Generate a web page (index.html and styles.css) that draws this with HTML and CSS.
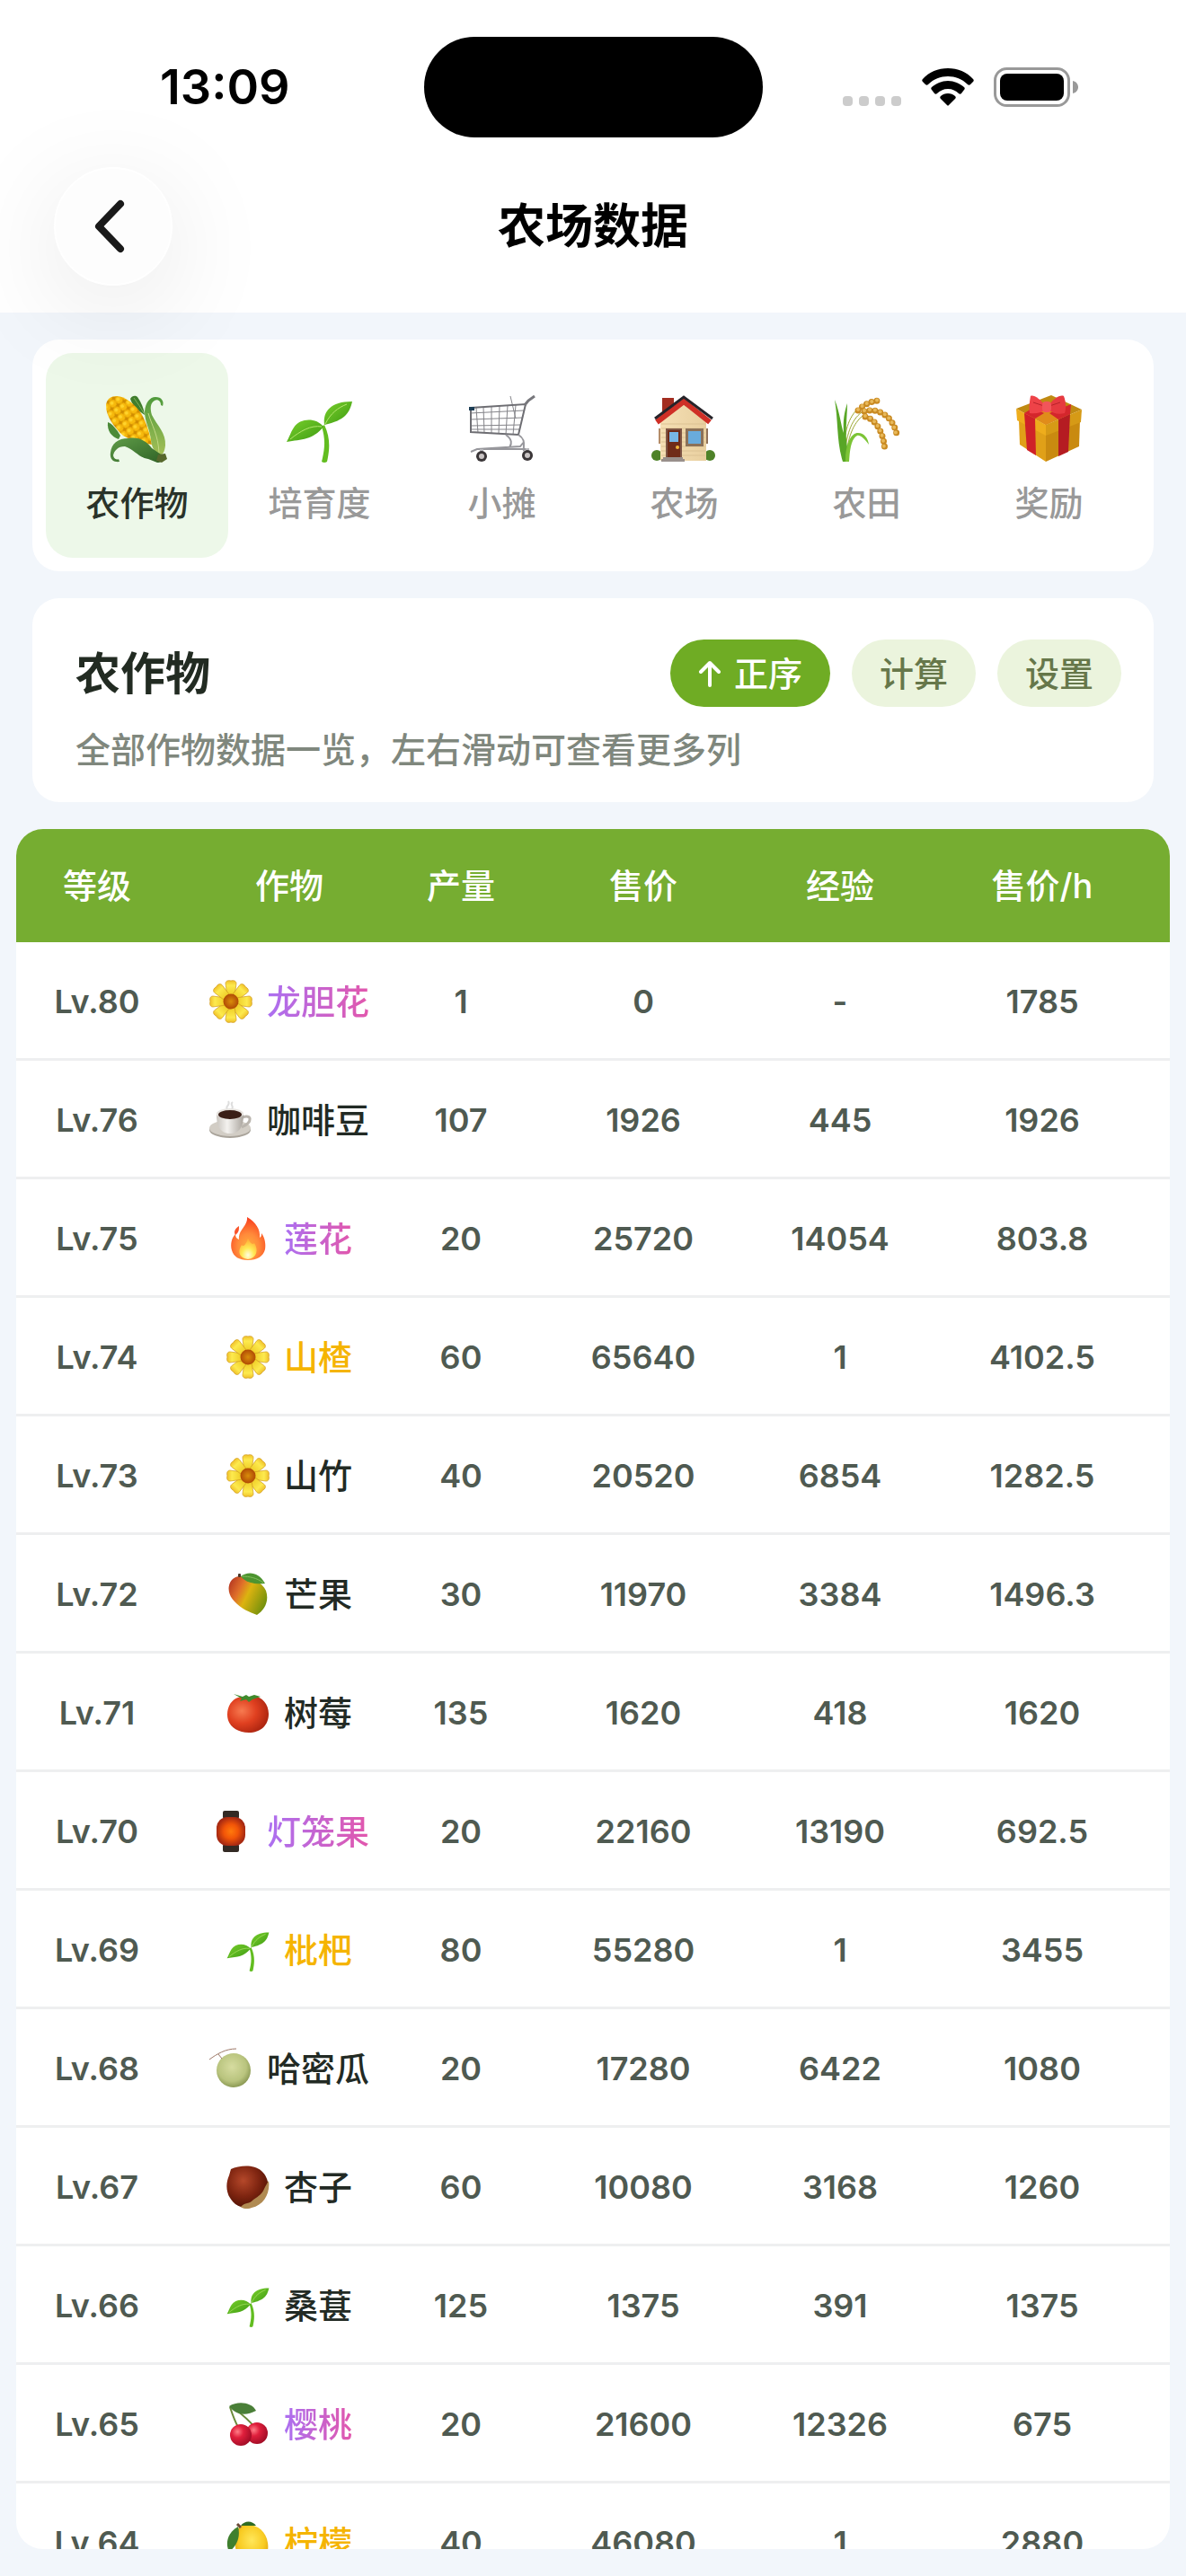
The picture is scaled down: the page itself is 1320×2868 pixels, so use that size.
FILE: index.html
```
<!DOCTYPE html>
<html lang="zh-CN">
<head>
    <meta charset="UTF-8">
    <meta name="viewport" content="width=device-width, initial-scale=1.0">
    <title>农场数据</title>
    <link rel="stylesheet" href="styles.css">
</head>
<body>
    <!-- Icon sprite -->
    <svg class="sprite" aria-hidden="true">
        <defs>
            <pattern id="kernels" width="8" height="9" patternUnits="userSpaceOnUse" patternTransform="rotate(-32)">
                <rect width="8" height="9" fill="#d08c00"/>
                <ellipse cx="4" cy="4.5" rx="3.9" ry="4.2" fill="#f7b90c"/>
                <ellipse cx="3.4" cy="3.4" rx="2" ry="2" fill="#ffd42c"/>
            </pattern>
            <linearGradient id="husk" x1="0" y1="0" x2="0" y2="1">
                <stop offset="0" stop-color="#4f9a3c"/><stop offset="1" stop-color="#a3bf56"/>
            </linearGradient>
            <linearGradient id="huskDark" x1="0" y1="0" x2="1" y2="1">
                <stop offset="0" stop-color="#5f9c48"/><stop offset="1" stop-color="#2f6226"/>
            </linearGradient>
            <linearGradient id="leaf" x1="0" y1="0" x2="1" y2="1">
                <stop offset="0" stop-color="#7ad02c"/><stop offset="1" stop-color="#3c9a12"/>
            </linearGradient>
            <radialGradient id="core">
                <stop offset="0" stop-color="#d98d0a"/><stop offset="1" stop-color="#b04a05"/>
            </radialGradient>
            <linearGradient id="petal" x1="0" y1="0" x2="0" y2="1">
                <stop offset="0" stop-color="#f0c02a"/><stop offset=".3" stop-color="#fdea4e"/><stop offset="1" stop-color="#ecc81f"/>
            </linearGradient>
            <linearGradient id="cup" x1="0" y1="0" x2="1" y2="0">
                <stop offset="0" stop-color="#c9c5bf"/><stop offset=".4" stop-color="#f4f2ef"/><stop offset="1" stop-color="#aaa59e"/>
            </linearGradient>
            <radialGradient id="flame" cx=".5" cy=".7" r=".7">
                <stop offset="0" stop-color="#ffb03c"/><stop offset=".45" stop-color="#ff8a3a"/><stop offset="1" stop-color="#f93a1c"/>
            </radialGradient>
            <radialGradient id="flameCore" cx=".5" cy=".8" r=".7">
                <stop offset="0" stop-color="#fffde0"/><stop offset=".5" stop-color="#ffe955"/><stop offset="1" stop-color="#ffb63a"/>
            </radialGradient>
            <linearGradient id="mangoSkin" x1="0" y1=".2" x2="1" y2=".7">
                <stop offset="0" stop-color="#b83a22"/><stop offset=".28" stop-color="#e0702a"/>
                <stop offset=".5" stop-color="#dcb310"/><stop offset="1" stop-color="#6f8f0c"/>
            </linearGradient>
            <radialGradient id="tomatoSkin" cx=".35" cy=".4" r=".7">
                <stop offset="0" stop-color="#f77a50"/><stop offset=".5" stop-color="#e04020"/><stop offset="1" stop-color="#a9230f"/>
            </radialGradient>
            <radialGradient id="glow">
                <stop offset="0" stop-color="#ff7a0c"/><stop offset=".5" stop-color="#f25508"/><stop offset="1" stop-color="#a82a12"/>
            </radialGradient>
            <radialGradient id="melonSkin" cx=".45" cy=".4" r=".6">
                <stop offset="0" stop-color="#d6dca0"/><stop offset=".7" stop-color="#b9c47e"/><stop offset="1" stop-color="#8c9a55"/>
            </radialGradient>
            <radialGradient id="nut" cx=".4" cy=".35" r=".65">
                <stop offset="0" stop-color="#b5482a"/><stop offset=".6" stop-color="#7d2410"/><stop offset="1" stop-color="#551405"/>
            </radialGradient>
            <radialGradient id="berry" cx=".35" cy=".35" r=".7">
                <stop offset="0" stop-color="#ff7c86"/><stop offset=".4" stop-color="#e01f3c"/><stop offset="1" stop-color="#a00d26"/>
            </radialGradient>
            <radialGradient id="lemonSkin" cx=".5" cy=".4" r=".65">
                <stop offset="0" stop-color="#ffe75a"/><stop offset=".6" stop-color="#f8cb22"/><stop offset="1" stop-color="#d99c0c"/>
            </radialGradient>
            <linearGradient id="wall" x1="0" y1="0" x2="1" y2="0">
                <stop offset="0" stop-color="#f5dfb4"/><stop offset="1" stop-color="#e8cf9f"/>
            </linearGradient>
        </defs>

        <symbol id="i-corn" viewBox="0 0 75 75">
            <path d="M5 30C9 31 15 38 19 45L17 49C9 46 4 40 5 30Z" fill="#4b8a38"/>
            <path d="M30 4C32 0 36 0 38 2C42 8 45 14 46 22C38 17 32 11 30 4Z" fill="#3f7d2c"/>
            <path d="M34 3C38 9 42 14 45 20" fill="none" stroke="#7fb35a"/>
            <path d="M3 12C3 4 9 1 15 1C24 1 35 10 42 20C48 30 52 44 54 55C42 53 30 50 22 45C12 36 3 23 3 12Z" fill="url(#kernels)"/>
            <path d="M46 18C47 8 52 2 58 2C65 2 68 7 66 12L64 11C64 6 60 4 57 6C52 9 52 15 54 22C60 34 70 42 69 56C68 64 66 67 62 66C56 62 54 58 53 50C52 38 46 30 46 18Z" fill="url(#husk)"/>
            <path d="M50 20C54 34 61 44 62 64" fill="none" stroke="#c2d884" stroke-width="1"/>
            <path d="M18 74C10 75 7 70 8 64C9 54 16 48 28 48C39 46 48 51 54 59L67 68C68 73 64 75 60 75L50 71C40 70 34 60 24 57C16 57 12 62 11 67C12 72 16 72 17 71Z" fill="url(#huskDark)"/>
            <path d="M61 66L69 65L71 71L65 75L59 73Z" fill="#57672c"/>
        </symbol>
        <symbol id="i-seedling" viewBox="0 0 75 75">
            <path d="M40 35C45 50 43 62 40 74Q43 76 46 74C49 60 50 48 43 33Z" fill="#62bd20"/>
            <path d="M43 33C41 18 50 7 74 7C71 20 66 28 43 33Z" fill="url(#leaf)"/>
            <path d="M42 35C34 25 16 25 9 36C5 42 4 47 1 52C18 49 30 50 42 35Z" fill="url(#leaf)"/>
            <path d="M44 32C50 20 58 14 68 10M40 35C28 33 16 40 5 49" fill="none" stroke="#b5e66e" stroke-width="1"/>
        </symbol>
        <symbol id="i-cart" viewBox="0 0 75 75">
            <g fill="none" stroke="#85858a" stroke-width="1">
                <path d="M9 14L11 42M17 13L18 42M26 12L26 43M35 12L34 43M44 11L42 44M53 11L50 44"/>
                <path d="M2 20L62 17M2 27L61 25M3 34L59 33M3 38L58 38M47 1L53 26"/>
            </g>
            <path d="M3 14L64 10L56 44L3 41Z" fill="none" stroke="#6e6e73" stroke-width="2"/>
            <path d="M63 11L67 6L74 1" fill="none" stroke="#77777c" stroke-width="3"/>
            <path d="M42 44C49 49 49 54 46 58M56 44C65 50 61 55 62 62M3 63L10 60L58 57L62 52M10 60L64 60" fill="none" stroke="#97979c" stroke-width="2"/>
            <rect x="1" y="13" width="6" height="4" fill="#1c3d55"/>
            <path d="M15 60V66M66 59V66" stroke="#b9b9bd" stroke-width="4"/>
            <circle cx="15" cy="68" r="6" fill="#3a3638"/><circle cx="15" cy="68" r="3" fill="#c9c4c4"/>
            <circle cx="66" cy="67" r="6" fill="#3a3638"/><circle cx="66" cy="67" r="3" fill="#c9c4c4"/>
        </symbol>
        <symbol id="i-house" viewBox="0 0 75 75">
            <circle cx="7" cy="67" r="6" fill="#4e8228"/><circle cx="66" cy="67" r="6" fill="#4e8228"/>
            <rect x="13" y="3" width="13" height="22" fill="#a32d20"/>
            <rect x="9" y="37" width="3" height="17" fill="#b58d68"/><rect x="61" y="37" width="3" height="17" fill="#8e7058"/>
            <path d="M11 26L37 7L62 26V73H11Z" fill="url(#wall)"/>
            <path d="M12 32H61M12 37H61M12 42H61M12 47H61M12 52H61M12 57H61M12 62H61M12 67H61" stroke="#dcc293" stroke-width="1"/>
            <path d="M7 30L37 7L66 30" fill="none" stroke="#cf2f26" stroke-width="6"/>
            <path d="M5 26L37 2L69 26" fill="none" stroke="#262329" stroke-width="3"/>
            <rect x="17" y="37" width="18" height="33" fill="#7e5544"/><rect x="19" y="39" width="14" height="30" fill="#6f2b18"/>
            <rect x="21" y="41" width="10" height="11" fill="#77b6e4"/><circle cx="30" cy="58" r="2" fill="#f0b63a"/>
            <rect x="39" y="37" width="20" height="20" fill="#8b7158"/><rect x="42" y="40" width="14" height="14" fill="#69abdc"/>
            <path d="M14 69H36V71H38V74H12V71H14Z" fill="#99908c"/>
        </symbol>
        <symbol id="i-rice" viewBox="0 0 75 75">
            <path d="M12 72C15 44 20 28 32 19M14 72C17 46 22 32 34 22M12 68C12 40 18 24 28 15" fill="none" stroke="#9aa62f" stroke-width="1"/>
            <path d="M2 5C8 20 9 34 12 42C11 28 13 18 16 9C16 22 14 36 15 50L18 74H11C4 52 6 28 2 5Z" fill="#58a626"/>
            <path d="M14 74C14 54 20 42 28 42C35 42 39 48 40 55C35 48 30 44 27 45C21 48 19 58 18 74Z" fill="#7cc436"/>
            <g fill="none" stroke-linecap="round">
                <path d="M28 17C34 11 42 6 54 6" stroke="#c98a22" stroke-width="7" stroke-dasharray="0 6"/>
                <path d="M35 18C50 14 66 22 71 43" stroke="#c98a22" stroke-width="7" stroke-dasharray="0 6"/>
                <path d="M36 24C48 27 57 42 58 63" stroke="#c98a22" stroke-width="7" stroke-dasharray="0 6"/>
                <path d="M28 16C34 10 42 6 54 5" stroke="#e8b95a" stroke-width="4" stroke-dasharray="0 6"/>
                <path d="M35 17C50 13 66 22 70 42" stroke="#e8b95a" stroke-width="4" stroke-dasharray="0 6"/>
                <path d="M36 23C48 26 57 42 57 62" stroke="#e8b95a" stroke-width="4" stroke-dasharray="0 6"/>
            </g>
        </symbol>
        <symbol id="i-gift" viewBox="0 0 75 75">
            <path d="M4 28L34 44V74L5 55Z" fill="#e0a018"/>
            <path d="M34 44L72 28L71 57L34 74Z" fill="#c98a10"/>
            <path d="M1 15L40 0L74 16L34 33Z" fill="#c08a12"/>
            <path d="M1 15L34 33V45L2 28Z" fill="#eead1c"/>
            <path d="M74 16L34 33V45L73 30Z" fill="#d69a16"/>
            <path d="M34 16L54 24L34 33L16 23Z" fill="#e08c1a"/>
            <path d="M10 20L22 26L23 67L13 61Z" fill="#cf2128"/>
            <path d="M61 21L48 27V68L59 63Z" fill="#b51c22"/>
            <path d="M10 20L20 14L32 20L22 26ZM61 21L48 27L38 20L62 10Z" fill="#d4262c"/>
            <path d="M33 12C28 4 20 -1 17 1C16 6 15 14 16 20C22 21 29 20 33 16Z" fill="#ee4348"/>
            <path d="M37 12C42 4 50 -1 54 1C56 6 57 14 55 20C48 22 41 20 37 16Z" fill="#e63a40"/>
            <path d="M32 12L20 8M38 12L50 8" stroke="#b8242b" stroke-width="1"/>
            <rect x="30" y="7" width="10" height="12" rx="4" fill="#f2555a"/>
        </symbol>
        <symbol id="i-flower" viewBox="0 0 48 48">
            <g fill="url(#petal)" stroke="#d09a1c" stroke-width=".7">
                <path id="p" d="M20 19L18 4C18 1 21 0 24 1C27 0 30 1 30 4L28 19Z"/>
                <use href="#p" transform="rotate(45 24 24)"/><use href="#p" transform="rotate(90 24 24)"/>
                <use href="#p" transform="rotate(135 24 24)"/><use href="#p" transform="rotate(180 24 24)"/>
                <use href="#p" transform="rotate(225 24 24)"/><use href="#p" transform="rotate(270 24 24)"/>
                <use href="#p" transform="rotate(315 24 24)"/>
            </g>
            <circle cx="24" cy="24" r="8.5" fill="url(#core)"/>
        </symbol>
        <symbol id="i-coffee" viewBox="0 0 48 48">
            <path d="M20 12C17 8 24 8 21 3M25 12C28 8 22 7 26 4" fill="none" stroke="#dddddd" stroke-width="2"/>
            <ellipse cx="23" cy="35" rx="23" ry="9" fill="#a9a39a"/><ellipse cx="23" cy="33" rx="23" ry="9" fill="#d2cdc5"/>
            <path d="M37 21C47 17 49 26 36 32" fill="none" stroke="#bab5ae" stroke-width="3"/>
            <path d="M8 18C8 29 11 39 23 39C35 39 38 29 38 18Z" fill="url(#cup)"/>
            <ellipse cx="23" cy="17" rx="15" ry="6" fill="#e6e3df"/><ellipse cx="23" cy="18" rx="13" ry="5" fill="#3a1f17"/>
        </symbol>
        <symbol id="i-fire" viewBox="0 0 48 48">
            <path d="M23 0C33 6 38 14 37 23C39 22 39 20 39 18C43 23 44 31 43 36C41 44 34 48 24 48C14 48 8 44 6 37C4 30 6 23 10 19C10 22 11 24 14 25C13 14 24 10 23 0Z" fill="url(#flame)"/>
            <path d="M14 10C9 13 8 17 10 20C14 17 14 14 14 10Z" fill="#f9532a"/>
            <path d="M24 24C27 30 29 31 31 29C36 36 34 46 24 47C14 46 12 38 17 31C19 34 22 30 24 24Z" fill="url(#flameCore)"/>
        </symbol>
        <symbol id="i-mango" viewBox="0 0 48 48">
            <path d="M15 4C25 3 40 10 44 20C48 32 42 42 34 47C26 44 16 40 9 32C1 24 1 14 6 8C8 6 11 4 15 4Z" fill="url(#mangoSkin)"/>
            <path d="M16 4C24 -2 36 -1 43 12C34 13 22 12 16 4Z" fill="#4d9430"/>
            <path d="M17 4C26 4 34 6 41 11" fill="none" stroke="#82be5c" stroke-width="1"/>
            <rect x="13" y="1" width="3" height="4" rx="1" fill="#4a3526"/>
        </symbol>
        <symbol id="i-tomato" viewBox="0 0 48 48">
            <path d="M24 7C36 2 47 12 47 25C47 38 38 46 25 46C11 46 1 38 1 26C1 12 12 3 24 7Z" fill="url(#tomatoSkin)"/>
            <path d="M8 3L18 6L22 4L25 6L31 4L38 6L29 9L25 12L22 9L15 11L17 8Z" fill="#3f8a2c"/>
        </symbol>
        <symbol id="i-lantern" viewBox="0 0 48 48">
            <rect x="15" y="1" width="18" height="9" rx="2" fill="#332a24"/><rect x="15" y="38" width="18" height="9" rx="2" fill="#332a24"/>
            <rect x="8" y="8" width="32" height="32" rx="12" fill="url(#glow)"/>
        </symbol>
        <symbol id="i-melon" viewBox="0 0 48 48">
            <circle cx="27" cy="26" r="19" fill="url(#melonSkin)"/>
            <path d="M0 14C8 8 18 2 30 2M10 8L14 13" fill="none" stroke="#9c7766" stroke-width="1"/>
        </symbol>
        <symbol id="i-chestnut" viewBox="0 0 48 48">
            <path d="M5 4C14 0 30 -2 39 6C48 14 49 28 41 38C34 47 20 50 10 43C0 35 -2 22 3 11Z" fill="url(#nut)"/>
            <path d="M47 17C49 30 42 44 28 47C23 49 18 48 16 46C20 41 26 43 30 38C36 34 40 31 42 26C44 22 45 20 47 17Z" fill="#b08a52"/>
        </symbol>
        <symbol id="i-cherries" viewBox="0 0 48 48">
            <path d="M4 5C7 14 10 22 13 27M8 6C16 12 24 18 31 27" fill="none" stroke="#6a8a3a" stroke-width="2"/>
            <path d="M3 4C12 -2 28 -1 33 9C22 15 10 14 3 4Z" fill="#4a7f38"/>
            <circle cx="34" cy="34" r="12" fill="url(#berry)"/><circle cx="16" cy="36" r="12" fill="url(#berry)"/>
        </symbol>
        <symbol id="i-lemon" viewBox="0 0 48 48">
            <path d="M15 6C28 0 44 8 46 24C48 36 42 46 28 47C16 46 8 36 10 20C10 14 12 9 15 6Z" fill="url(#lemonSkin)"/>
            <path d="M13 6C2 12 -2 24 3 34C11 28 16 18 13 6Z" fill="#3f7f2e"/>
            <path d="M16 5C20 -1 29 -1 33 5Z" fill="#2f6b22"/>
            <path d="M12 3L16 7" stroke="#6a4a35" stroke-width="3"/>
        </symbol>
    </svg>

    <header class="header">
        <div class="status-bar">
            <span class="time">13:09</span>
            <span class="island"></span>
            <div class="status-icons">
                <svg width="66" height="42" viewBox="0 0 66 42" fill="#cccccc" aria-hidden="true">
                    <rect x="0" y="31" width="11" height="11" rx="4"/><rect x="18" y="31" width="11" height="11" rx="4"/>
                    <rect x="36" y="31" width="11" height="11" rx="4"/><rect x="54" y="31" width="11" height="11" rx="4"/>
                </svg>
                <svg width="58" height="42" viewBox="0 0 58 42" aria-hidden="true">
                    <path d="M29 0C40 0 50 4 57 12C58 13 58 14 57 15L54 18C53 19 52 19 51 18C45 12 37 9 29 9C21 9 13 12 7 18C6 19 5 19 4 18L1 15C0 14 0 13 1 12C8 4 18 0 29 0Z"/>
                    <path d="M29 14C36 14 42 17 47 21C48 22 48 23 47 24L44 28C43 29 42 29 41 28C38 25 34 23 29 23C24 23 20 25 17 28C16 29 15 29 14 28L11 24C10 23 10 22 11 21C16 17 22 14 29 14Z"/>
                    <path d="M29 28C32 28 35 29 37 31C38 32 38 33 37 34L30 41C29 42 29 42 28 41L21 34C20 33 20 32 21 31C23 29 26 28 29 28Z"/>
                </svg>
                <svg width="94" height="44" viewBox="0 0 94 44" aria-hidden="true">
                    <rect x="1.5" y="1.5" width="82" height="41" rx="13" fill="none" stroke="#999999" stroke-width="3"/>
                    <rect x="7" y="7" width="71" height="30" rx="8"/>
                    <path d="M88 15C92 16 94 19 94 22C94 25 92 28 88 29Z" fill="#999999"/>
                </svg>
            </div>
        </div>
        <nav class="nav-bar">
            <button class="back" type="button" aria-label="返回">
                <svg width="34" height="60" viewBox="0 0 34 60" fill="none" stroke="#1a1a1a" stroke-width="8" stroke-linecap="round" stroke-linejoin="round" aria-hidden="true">
                    <path d="M29 5L5 30L29 55"/>
                </svg>
            </button>
            <h1>农场数据</h1>
        </nav>
    </header>

    <main class="content">
        <div class="tabs card">
            <button class="tab active" type="button"><svg><use href="#i-corn"/></svg>农作物</button>
            <button class="tab" type="button"><svg><use href="#i-seedling"/></svg>培育度</button>
            <button class="tab" type="button"><svg><use href="#i-cart"/></svg>小摊</button>
            <button class="tab" type="button"><svg><use href="#i-house"/></svg>农场</button>
            <button class="tab" type="button"><svg><use href="#i-rice"/></svg>农田</button>
            <button class="tab" type="button"><svg><use href="#i-gift"/></svg>奖励</button>
        </div>

        <section class="summary card">
            <div class="summary-top">
                <h2>农作物</h2>
                <div class="actions">
                    <button class="pill primary" type="button">
                        <svg width="26" height="30" viewBox="0 0 26 30" fill="none" stroke="#ffffff" stroke-width="4" stroke-linecap="round" stroke-linejoin="round" aria-hidden="true"><path d="M13 28V3M3 13L13 3L23 13"/></svg>
                        正序
                    </button>
                    <button class="pill" type="button">计算</button>
                    <button class="pill" type="button">设置</button>
                </div>
            </div>
            <p>全部作物数据一览，左右滑动可查看更多列</p>
        </section>

        <div class="table-wrap">
            <table>
                <colgroup>
                    <col class="col-level"><col class="col-crop"><col class="col-yield"><col class="col-price"><col class="col-exp"><col>
                </colgroup>
                <thead>
                    <tr><th>等级</th><th>作物</th><th>产量</th><th>售价</th><th>经验</th><th>售价/h</th></tr>
                </thead>
                <tbody>
                    <tr><td>Lv.80</td><td><div class="crop"><svg><use href="#i-flower"/></svg><span class="epic">龙胆花</span></div></td><td>1</td><td>0</td><td>-</td><td>1785</td></tr>
                    <tr><td>Lv.76</td><td><div class="crop"><svg><use href="#i-coffee"/></svg><span>咖啡豆</span></div></td><td>107</td><td>1926</td><td>445</td><td>1926</td></tr>
                    <tr><td>Lv.75</td><td><div class="crop"><svg><use href="#i-fire"/></svg><span class="epic">莲花</span></div></td><td>20</td><td>25720</td><td>14054</td><td>803.8</td></tr>
                    <tr><td>Lv.74</td><td><div class="crop"><svg><use href="#i-flower"/></svg><span class="gold">山楂</span></div></td><td>60</td><td>65640</td><td>1</td><td>4102.5</td></tr>
                    <tr><td>Lv.73</td><td><div class="crop"><svg><use href="#i-flower"/></svg><span>山竹</span></div></td><td>40</td><td>20520</td><td>6854</td><td>1282.5</td></tr>
                    <tr><td>Lv.72</td><td><div class="crop"><svg><use href="#i-mango"/></svg><span>芒果</span></div></td><td>30</td><td>11970</td><td>3384</td><td>1496.3</td></tr>
                    <tr><td>Lv.71</td><td><div class="crop"><svg><use href="#i-tomato"/></svg><span>树莓</span></div></td><td>135</td><td>1620</td><td>418</td><td>1620</td></tr>
                    <tr><td>Lv.70</td><td><div class="crop"><svg><use href="#i-lantern"/></svg><span class="epic">灯笼果</span></div></td><td>20</td><td>22160</td><td>13190</td><td>692.5</td></tr>
                    <tr><td>Lv.69</td><td><div class="crop"><svg><use href="#i-seedling"/></svg><span class="gold">枇杷</span></div></td><td>80</td><td>55280</td><td>1</td><td>3455</td></tr>
                    <tr><td>Lv.68</td><td><div class="crop"><svg><use href="#i-melon"/></svg><span>哈密瓜</span></div></td><td>20</td><td>17280</td><td>6422</td><td>1080</td></tr>
                    <tr><td>Lv.67</td><td><div class="crop"><svg><use href="#i-chestnut"/></svg><span>杏子</span></div></td><td>60</td><td>10080</td><td>3168</td><td>1260</td></tr>
                    <tr><td>Lv.66</td><td><div class="crop"><svg><use href="#i-seedling"/></svg><span>桑葚</span></div></td><td>125</td><td>1375</td><td>391</td><td>1375</td></tr>
                    <tr><td>Lv.65</td><td><div class="crop"><svg><use href="#i-cherries"/></svg><span class="epic">樱桃</span></div></td><td>20</td><td>21600</td><td>12326</td><td>675</td></tr>
                    <tr><td>Lv.64</td><td><div class="crop"><svg><use href="#i-lemon"/></svg><span class="gold">柠檬</span></div></td><td>40</td><td>46080</td><td>1</td><td>2880</td></tr>
                </tbody>
            </table>
        </div>
    </main>
</body>
</html>
```
FILE: styles.css
```
* {
    box-sizing: border-box;
}

body {
    margin: 0;
    height: 100vh;
    display: flex;
    flex-direction: column;
    background-color: #f2f6fb;
    font-family: Inter, "Noto Sans CJK SC", sans-serif;
    font-size: 38px;
    font-weight: 500;
    line-height: 56px;
    color: #222a24;
}

button {
    border: 0;
    margin: 0;
    font: inherit;
    cursor: pointer;
}

h1, h2, p {
    margin: 0;
}

.sprite {
    position: absolute;
    width: 0;
    height: 0;
}

/* Header */
.header {
    position: relative;
    z-index: 1;
    background-color: #fff;
}

.status-bar {
    display: grid;
    grid-template-columns: 1fr auto 1fr;
    align-items: center;
    padding-top: 41px;
}

.time {
    padding-left: 178px;
    font-size: 54px;
    font-weight: 600;
    color: #000;
}

.island {
    width: 377px;
    height: 112px;
    border-radius: 56px;
    background-color: #000;
}

.status-icons {
    display: flex;
    justify-content: flex-end;
    align-items: center;
    gap: 22px;
    padding-right: 120px;
}

.nav-bar {
    display: grid;
    grid-template-columns: 1fr auto 1fr;
    align-items: center;
    padding: 33px 60px 30px;
}

.back {
    display: flex;
    align-items: center;
    justify-content: center;
    width: 132px;
    height: 132px;
    padding: 0 8px 0 0;
    border: 2px solid #fff;
    border-radius: 50%;
    background-color: #fdfdfd;
    box-shadow: 0 24px 120px rgba(0, 0, 0, 0.1);
}

h1 {
    font-size: 53px;
    font-weight: 600;
    color: #000;
}

/* Cards */
.content {
    flex: 1;
    min-height: 0;
    display: flex;
    flex-direction: column;
    gap: 30px;
    padding: 30px 18px;
}

.card {
    margin: 0 18px;
    border-radius: 30px;
    background-color: #fff;
}

.tabs {
    display: grid;
    grid-template-columns: repeat(6, 1fr);
    padding: 15px;
}

.tab {
    display: flex;
    flex-direction: column;
    align-items: center;
    gap: 17px;
    padding: 47px 0 33px;
    border-radius: 30px;
    background: none;
    color: #999;
}

.tab svg {
    width: 75px;
    height: 75px;
}

.tab.active {
    background-color: #edf8e9;
    color: #2a332a;
}

.summary {
    padding: 46px 36px 30px 48px;
}

.summary-top {
    display: flex;
    justify-content: space-between;
    align-items: center;
    margin-bottom: 20px;
}

h2 {
    font-size: 50px;
    font-weight: 600;
    color: #222b22;
}

.summary p {
    font-size: 39px;
    color: #7f877d;
}

.actions {
    display: flex;
    gap: 24px;
}

.pill {
    display: flex;
    align-items: center;
    gap: 14px;
    height: 75px;
    padding: 0 31px;
    border-radius: 38px;
    background-color: #ebf4dd;
    color: #66774a;
}

.pill.primary {
    background-color: #6fac24;
    color: #fff;
}

/* Table */
.table-wrap {
    flex: 1;
    min-height: 0;
    overflow: hidden;
    border-radius: 30px;
    background-color: #fff;
}

table {
    width: 100%;
    table-layout: fixed;
    border-collapse: separate;
    border-spacing: 0;
}

.col-level {
    width: 180px;
}

.col-crop {
    width: 248px;
}

.col-yield {
    width: 134px;
}

.col-price {
    width: 272px;
}

.col-exp {
    width: 166px;
}

th, td {
    padding: 0;
    text-align: center;
    white-space: nowrap;
}

th {
    height: 126px;
    background-color: #76ad31;
    font-weight: 500;
    color: #fff;
}

td {
    height: 132px;
    padding-top: 2px;
    border-bottom: 3px solid #eeeff0;
    font-size: 36px;
    font-weight: 600;
    color: #4f5a51;
}

.crop {
    display: flex;
    align-items: center;
    justify-content: center;
    gap: 16px;
    font-size: 38px;
    font-weight: 500;
    color: #222a24;
}

.crop svg {
    width: 48px;
    height: 48px;
}

.gold {
    color: #f5b400;
}

.epic {
    background-image: linear-gradient(90deg, #ab70f2, #e257ac);
    background-clip: text;
    -webkit-background-clip: text;
    color: transparent;
}
```
